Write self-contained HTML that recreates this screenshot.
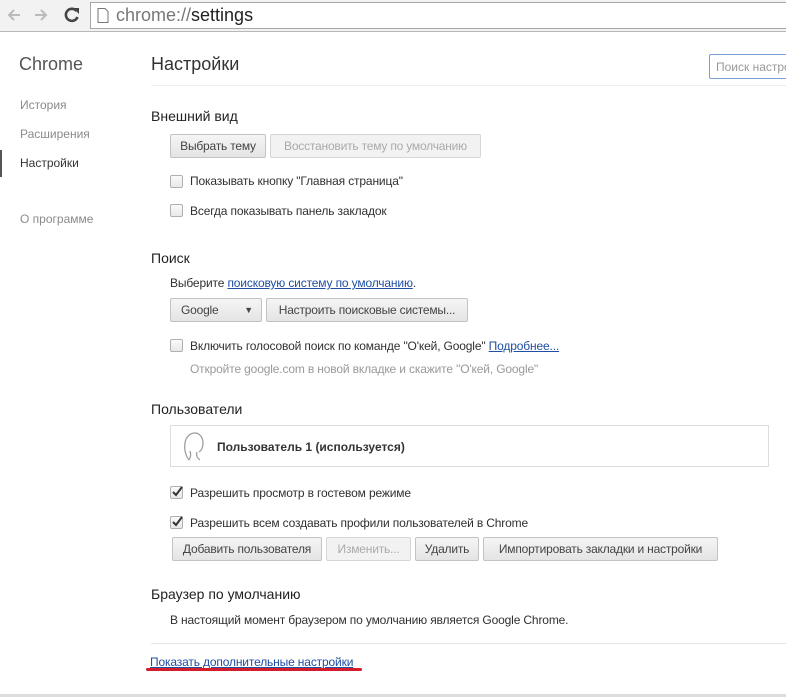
<!DOCTYPE html>
<html><head><meta charset="utf-8"><style>
*{margin:0;padding:0;box-sizing:border-box}
body{width:786px;height:697px;overflow:hidden;background:#fff;font-family:"Liberation Sans",sans-serif;font-size:12px;color:#303030;position:relative}
.a{position:absolute;white-space:nowrap}
.tb{position:absolute;left:0;top:0;width:786px;height:32px;background:#f2f2f2;border-bottom:1px solid #b8b8b8}
.omni{position:absolute;left:90px;top:2px;width:700px;height:27px;background:#fff;border:1px solid #a8a8a8}
.btn{position:absolute;height:24px;border:1px solid #c3c3c3;border-radius:2px;background:linear-gradient(#f5f5f5,#e4e4e4);font-size:12px;color:#444;text-align:center;line-height:22px;white-space:nowrap;letter-spacing:-0.2px}
.dis{color:#aaa;background:#f2f2f2;border-color:#d6d6d6}
.cb{position:absolute;width:13px;height:13px;border:1px solid #b0b0b0;border-radius:2px;background:linear-gradient(#fafafa,#e8e8e8)}
.h{font-size:14px;color:#222}
.nav{font-size:12px;color:#8a8a8a}
.t{letter-spacing:-0.15px}
a{color:#1f4ea3;text-decoration:underline}
</style></head><body>
<div class="tb">
<svg class="a" style="left:6px;top:7px" width="16" height="16"><path d="M14 8H3M8 3L3 8l5 5" fill="none" stroke="#bbb" stroke-width="2"/></svg>
<svg class="a" style="left:33px;top:7px" width="16" height="16"><path d="M2 8h11M8 3l5 5-5 5" fill="none" stroke="#bbb" stroke-width="2"/></svg>
<svg class="a" style="left:63px;top:6px" width="18" height="18"><path d="M13.5 5A6 6 0 1 0 14.5 11" fill="none" stroke="#444" stroke-width="2.6"/><path d="M10 2l6 0 0 6z" fill="#444"/></svg>
<div class="omni">
<svg class="a" style="left:6px;top:5px" width="12" height="15"><path d="M1 .5h7l3 3v11H1z" fill="#fff" stroke="#777"/></svg>
<div class="a" style="left:25px;top:2px;font-size:18px;color:#777">chrome://<span style="color:#222">settings</span></div>
</div>
</div>
<div class="a" style="left:19px;top:54px;font-size:18px;color:#555">Chrome</div>
<div class="a nav" style="left:20px;top:98px">История</div>
<div class="a nav" style="left:20px;top:127px">Расширения</div>
<div class="a" style="left:0;top:150px;width:2px;height:27px;background:#555"></div>
<div class="a" style="left:20px;top:156px;color:#333">Настройки</div>
<div class="a nav" style="left:20px;top:212px">О программе</div>
<div class="a" style="left:151px;top:54px;font-size:18px;color:#333">Настройки</div>
<div class="a" style="left:151px;top:85px;width:640px;height:1px;background:#eee"></div>
<div class="a" style="left:709px;top:54px;width:90px;height:25px;border:1px solid #7a9fd4;border-radius:2px;color:#999;font-size:12px;padding:5px 6px">Поиск настро</div>
<div class="a h" style="left:151px;top:108px">Внешний вид</div>
<div class="btn" style="left:170px;top:134px;width:96px">Выбрать тему</div>
<div class="btn dis" style="left:270px;top:134px;width:211px">Восстановить тему по умолчанию</div>
<div class="cb" style="left:170px;top:175px"></div><div class="a t" style="left:190px;top:174px">Показывать кнопку "Главная страница"</div>
<div class="cb" style="left:170px;top:204px"></div><div class="a t" style="left:190px;top:204px">Всегда показывать панель закладок</div>
<div class="a h" style="left:151px;top:250px">Поиск</div>
<div class="a t" style="left:170px;top:276px">Выберите <a>поисковую систему по умолчанию</a>.</div>
<div class="btn" style="left:170px;top:298px;width:92px;text-align:left;padding-left:10px">Google<span style="position:absolute;right:8px;top:0;font-size:9px">▼</span></div>
<div class="btn" style="left:266px;top:298px;width:202px">Настроить поисковые системы...</div>
<div class="cb" style="left:170px;top:339px"></div><div class="a t" style="left:190px;top:339px">Включить голосовой поиск по команде "О'кей, Google" <a>Подробнее...</a></div>
<div class="a t" style="left:190px;top:362px;color:#999">Откройте google.com в новой вкладке и скажите "О'кей, Google"</div>
<div class="a h" style="left:151px;top:401px">Пользователи</div>
<div class="a" style="left:170px;top:425px;width:599px;height:42px;border:1px solid #ddd"></div>
<svg class="a" style="left:182px;top:430px" width="24" height="34"><path d="M7 30C4 26 2 20 3 13 4 6 9 3 13 3s8 4 8 10c0 5-2 8-4 9M7 30c2-3 2-6 1-9M15 22c-1 3 0 6 3 8" fill="none" stroke="#999" stroke-width="1.2"/></svg>
<div class="a" style="left:217px;top:440px;font-weight:bold;color:#333">Пользователь 1 (используется)</div>
<div class="cb" style="left:170px;top:486px"></div><svg class="a" style="left:170px;top:485px" width="14" height="14"><path d="M3 7l3 3 6-8" fill="none" stroke="#333" stroke-width="2"/></svg><div class="a t" style="left:190px;top:486px">Разрешить просмотр в гостевом режиме</div>
<div class="cb" style="left:170px;top:516px"></div><svg class="a" style="left:170px;top:515px" width="14" height="14"><path d="M3 7l3 3 6-8" fill="none" stroke="#333" stroke-width="2"/></svg><div class="a t" style="left:190px;top:516px">Разрешить всем создавать профили пользователей в Chrome</div>
<div class="btn" style="left:172px;top:537px;width:150px">Добавить пользователя</div>
<div class="btn dis" style="left:326px;top:537px;width:85px">Изменить...</div>
<div class="btn" style="left:415px;top:537px;width:64px">Удалить</div>
<div class="btn" style="left:483px;top:537px;width:235px">Импортировать закладки и настройки</div>
<div class="a h" style="left:151px;top:586px">Браузер по умолчанию</div>
<div class="a t" style="left:170px;top:613px">В настоящий момент браузером по умолчанию является Google Chrome.</div>
<div class="a" style="left:151px;top:643px;width:640px;height:1px;background:#e6e6e6"></div>
<div class="a t" style="left:150px;top:655px"><a>Показать дополнительные настройки</a></div>
<div class="a" style="left:146px;top:668px;width:216px;height:3px;background:#d41c2a;border-radius:2px"></div>
<div class="a" style="left:0;top:694px;width:786px;height:3px;background:#ddd"></div>
</body></html>
